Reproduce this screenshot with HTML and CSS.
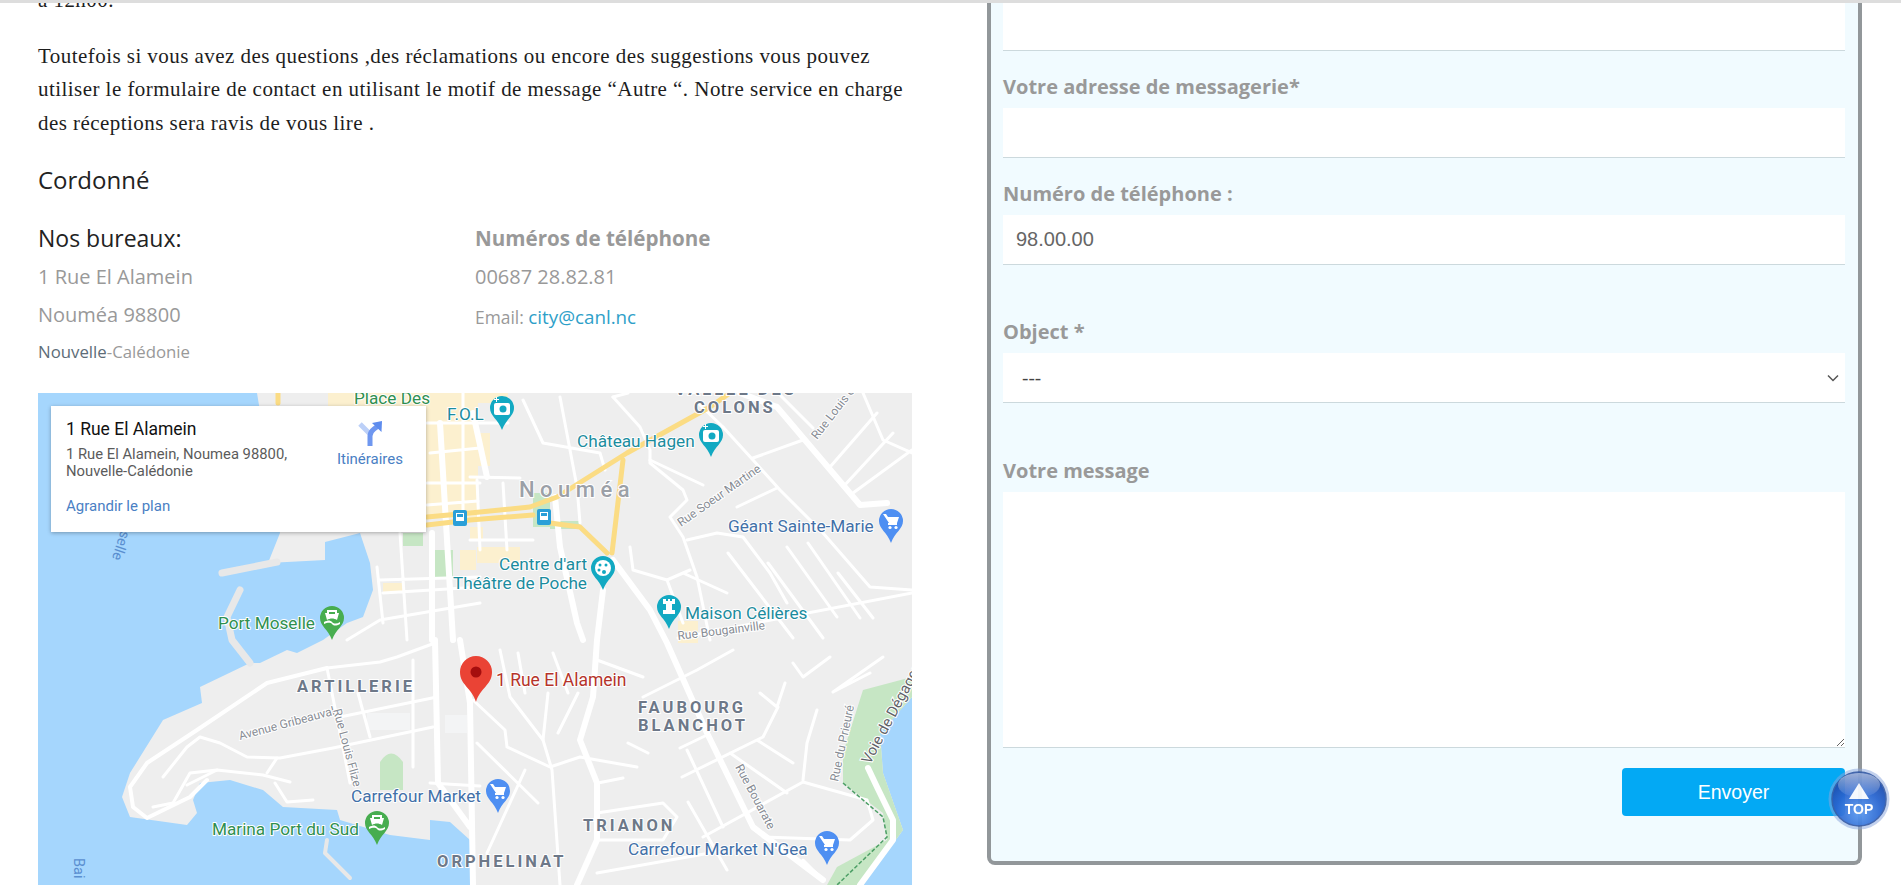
FILE: index.html
```html
<!DOCTYPE html>
<html lang="fr">
<head>
<meta charset="utf-8">
<title>Contact</title>
<link rel="stylesheet" href="styles.css">
</head>
<body>
<div class="topbar"></div>
<div class="page">
  <main class="content">
    <p class="intro clipped">à 12h00.</p>
    <p class="intro">Toutefois si vous avez des questions ,des réclamations ou encore des suggestions vous pouvez<br>utiliser le formulaire de contact en utilisant le motif de message “Autre “. Notre service en charge<br>des réceptions sera ravis de vous lire .</p>
    <h2 class="coord-title">Cordonné</h2>
    <div class="coords">
      <div class="coord-col">
        <h3 class="office-title">Nos bureaux:</h3>
        <p class="line">1 Rue El Alamein</p>
        <p class="line">Nouméa 98800</p>
        <p class="line small"><span class="slate">Nouvelle</span>-Calédonie</p>
      </div>
      <div class="coord-col right-col">
        <h3 class="phone-title">Numéros de téléphone</h3>
        <p class="line">00687 28.82.81</p>
        <p class="line email">Email: <a class="mail" href="#">city@canl.nc</a></p>
      </div>
    </div>
    <div class="map">
      <svg class="map-svg" viewBox="0 0 874 492" width="874" height="492" xmlns="http://www.w3.org/2000/svg">
        <defs>
          <path id="pin" d="M-12 0A12 12 0 1 1 12 0C12 8 4 11 0 22C-4 11-12 8-12 0Z"/>
          <g id="cart"><use href="#pin"/><path class="w" d="M-8-7H-5L-3-4H8L6 2H-2ZM-3 2H6V4H-3Z"/><circle class="w" cx="-1" cy="6.500" r="1.600"/><circle class="w" cx="5" cy="6.500" r="1.600"/></g>
          <g id="cam"><use href="#pin"/><rect class="w" x="-8" y="-5" width="16" height="12" rx="2"/><circle cx="1" cy="1" r="3.500"/><path class="w" d="M-8-9h2v-2h1v2h2v1h-2v2h-1v-2h-2z"/></g>
          <g id="ship"><use href="#pin"/><path class="w" d="M-5-8H5V-5H7L5 2C2 0-2 0-5 2L-7-5H-5Z"/><path d="M-3-6H3V-4H-3Z"/><path class="w" d="M-8 4C-4 2-2 2 0 4C2 6 5 6 8 4V6C4 8 2 8 0 6C-2 4-5 5-8 6Z"/></g>
        </defs>
        <rect class="land" width="874" height="492"/>
        <path class="water" d="M0 0H219L242 140L230 170L287 167L287 149L322 140L332 170L335 197L325 224L309 230L285 247L259 260L249 257L222 270L212 270L162 294L164 310L125 327L92 380L84 404L92 424L149 432L159 420L155 407L162 390L192 387L225 397L245 414L299 417L302 427L352 442L392 447L392 427L412 429L432 447L435 492H0Z"/>
        <path class="water" d="M874 304L842 340L845 380L865 437L825 492H874Z"/>
        <path class="green" d="M874 284L825 297L805 360L805 390L845 420L849 447L799 474L789 492H825L865 437L845 380L842 340L874 304Z"/>
        <path class="green" d="M342 369Q353 352 365 369V397H342Z"/>
        <path class="green" d="M394 157H415V184H394ZM365 140H385V153H365ZM495 100H512V134H495ZM512 128H542V136H512Z"/>
        <path class="cream" d="M290 0H470V10H440V125H290ZM422 157H438V177H422ZM345 190H365V200H345ZM432 40H452V73H432ZM439 154H482V170H439ZM432 134H445V147H432ZM640 228H660V250H640Z"/>
        <path class="pale" d="M329 320H372V337H329ZM407 322H429V340H407Z"/>
        <path class="pier" d="M184 180L239 169M202 197L189 224L194 247L212 270"/>
        <path class="pier thin" d="M289 447L287 460L312 485"/>
        <g class="r">
          <path d="M125 384L149 354L162 344L182 350L209 364L242 365L295 355L395 334"/>
          <path d="M115 414L135 410L152 380L179 377L225 382L252 389"/>
          <path d="M149 392L179 377M239 365L229 380M237 390L249 409L275 407M289 275L312 390M302 324L399 304M320 300L332 344M375 267V374M289 275L342 269L359 264L397 250"/>
          <path d="M392 390L442 393M362 140L369 247M339 174L345 230M342 187L442 184M345 200L442 194M309 247L342 227L442 210M389 90H442M392 60L442 55M389 30H470M425 0V125M389 112L440 108"/>
          <path d="M432 84L482 85M439 87L442 157M465 90L469 157M432 147H495M485 7L505 50L562 60L567 77M522 4L539 94L542 130"/>
          <path d="M575 4L602 34L612 57V70L645 97L649 107L632 124L645 144L659 184L672 247"/>
          <path d="M612 67L665 92M685 34L715 67L742 97L785 140L832 194L874 197M715 65L765 47M649 147L679 140L705 144L732 180L749 210M699 114L739 95"/>
          <path d="M792 74L839 20M805 94L855 40M815 100L874 57M825 0L845 47L874 60M592 154L595 177L629 187L652 177M645 180L689 200M629 187L645 230"/>
          <path d="M749 154L799 224M770 150L822 225M800 180L835 225M690 160L755 245M730 170L785 245M640 245L874 200M660 10L685 34M590 0L575 4M740 0L775 35"/>
          <path d="M559 267L605 284M605 304L659 277L695 257M462 257L472 304L505 347L514 377L522 492M435 307L467 337L469 354L512 374L542 364L599 374M439 350L500 410M487 377L449 460"/>
          <path d="M559 420L625 410L639 424L625 447L559 447M642 355L669 342M644 384L725 344L740 314M649 357L685 434M692 360L749 400M719 347L755 370M722 300L739 314L747 290"/>
          <path d="M665 444L765 389L829 407L835 427L812 447M725 444L812 447M765 387L769 350M769 350L779 317M650 409L689 477M559 480L672 460M765 467L785 487"/>
          <path d="M795 299L832 280M795 299L845 264M755 270L765 284L792 264M480 260L487 300M540 300L520 340M590 350L610 360"/>
          <path d="M505 347L510 300M560 390L585 385M515 260L530 300"/>
        </g>
        <g class="rs">
          <path d="M289 275L229 290L159 337L109 370L92 394L95 414L109 425L152 404L169 387"/>
        </g>
        <g class="rm">
          <path d="M397 247L400 390L432 434M422 247L432 310L435 492M394 140V247M402 30L415 247"/>
          <path d="M517 104L522 154L539 230L545 247M565 197L559 247L555 304L542 347L559 390V447L539 492"/>
          <path d="M739 14L822 112L849 110M702 0L739 14M575 167L612 217L629 250L669 340L715 434L732 447L785 487"/>
          <path d="M830 375L839 394L855 427V447L822 492"/>
          <path d="M435 20L449 84"/>
        </g>
        <g class="y">
          <path d="M240 0V10M389 124L432 120L492 114L519 104L589 60L672 14L692 0"/>
          <path d="M389 132L432 127L495 122M585 67L574 160M512 130L542 134L569 160"/>
        </g>
        <path class="dash" d="M805 390L845 424L849 444L799 492"/>

        <use class="teal" href="#cam" x="464" y="15"/>
        <use class="teal" href="#cam" x="673" y="42"/>
        <g class="teal" transform="translate(565 175)"><use href="#pin"/><circle class="w" r="8"/><circle cx="-3" cy="-3" r="1.500"/><circle cx="3" cy="-3" r="1.500"/><circle cx="-4" cy="2" r="1.500"/><circle cx="1" cy="4" r="2"/></g>
        <g class="teal" transform="translate(631 214)"><use href="#pin"/><path class="w" d="M-6-8H-3V-6H-1V-8H1V-6H3V-8H6V-3H3V3H6V7H-6V3H-3V-3H-6Z"/></g>
        <use class="blue" href="#cart" x="853" y="128"/>
        <use class="blue" href="#cart" x="460" y="398"/>
        <use class="blue" href="#cart" x="789" y="450"/>
        <use class="gr" href="#ship" x="294" y="225"/>
        <use class="gr" href="#ship" x="339" y="430"/>
        <g class="bus" transform="translate(506 124)"><rect x="-7" y="-8" width="14" height="16" rx="2"/><path class="w" d="M-4-5H4V3H-4Z"/><path d="M-3-4H3V-1H-3Z"/></g>
        <g class="bus" transform="translate(422 125)"><rect x="-7" y="-8" width="14" height="16" rx="2"/><path class="w" d="M-4-5H4V3H-4Z"/><path d="M-3-4H3V-1H-3Z"/></g>

        <g class="poi t-green">
          <text x="316" y="11">Place Des</text>
          <text x="180" y="236">Port Moselle</text>
          <text x="174" y="442">Marina Port du Sud</text>
        </g>
        <g class="poi t-teal">
          <text x="409" y="27">F.O.L</text>
          <text x="539" y="54">Château Hagen</text>
          <text x="549" y="177" text-anchor="end">Centre d'art</text>
          <text x="549" y="196" text-anchor="end">Théâtre de Poche</text>
          <text x="647" y="226">Maison Célières</text>
        </g>
        <g class="poi t-blue">
          <text x="690" y="139">Géant Sainte-Marie</text>
          <text x="313" y="409">Carrefour Market</text>
          <text x="590" y="462">Carrefour Market N'Gea</text>
        </g>
        <text class="poi t-red" x="458" y="293">1 Rue El Alamein</text>
        <text class="city" x="481" y="104">Nouméa</text>
        <g class="area">
          <text x="637" y="2">VALLEE DES</text>
          <text x="656" y="20">COLONS</text>
          <text x="259" y="299">ARTILLERIE</text>
          <text x="600" y="320">FAUBOURG</text>
          <text x="600" y="338">BLANCHOT</text>
          <text x="545" y="438">TRIANON</text>
          <text x="399" y="474">ORPHELINAT</text>
        </g>
        <g class="street">
          <text transform="translate(779 47) rotate(-52)">Rue Louis C</text>
          <text transform="translate(643 134) rotate(-35)">Rue Soeur Martine</text>
          <text transform="translate(640 247) rotate(-7)">Rue Bougainville</text>
          <text transform="translate(202 347) rotate(-15)">Avenue Gribeauval</text>
          <text transform="translate(295 317) rotate(75)">Rue Louis Flize</text>
          <text transform="translate(697 374) rotate(62)">Rue Bouarate</text>
          <text transform="translate(800 389) rotate(-78)">Rue du Prieuré</text>
        </g>
        <text class="road-big" transform="translate(832 372) rotate(-62)">Voie de Dégager</text>
        <g class="sea">
          <text transform="translate(83 137) rotate(108)">selle</text>
          <text transform="translate(36 465) rotate(90)">Bai</text>
        </g>
        <path class="redpin" d="M438 309C434 295 422 292 422 279A16 16 0 1 1 454 279C454 292 442 295 438 309Z"/>
        <circle class="reddot" cx="438" cy="279" r="5.500"/>
      </svg>
      <div class="info">
        <div class="info-main">
          <div class="info-title">1 Rue El Alamein</div>
          <div class="info-addr">1 Rue El Alamein, Noumea 98800,<br>Nouvelle-Calédonie</div>
          <a class="info-link" href="#">Agrandir le plan</a>
        </div>
        <a class="info-dir" href="#">
          <svg class="dir-icon" viewBox="0 0 30 30" width="30" height="30" xmlns="http://www.w3.org/2000/svg">
            <path class="dir-pale" d="M5 6L15 16"/>
            <path class="dir-blue" d="M15 28V18Q15 14 19 11L23 8"/>
            <path class="dir-head" d="M27 3L26.500 14L17 5Z"/>
          </svg>
          <span>Itinéraires</span>
        </a>
      </div>
    </div>
  </main>
  <form class="panel">
    <input class="field first" type="text">
    <label class="label l-mail">Votre adresse de messagerie*</label>
    <input class="field" type="text">
    <label class="label l-tel">Numéro de téléphone :</label>
    <input class="field" type="text" value="98.00.00">
    <label class="label l-obj">Object *</label>
    <select class="field pick"><option>---</option></select>
    <label class="label l-msg">Votre message</label>
    <textarea class="area-field"></textarea>
    <div class="actions"><button class="send" type="button">Envoyer</button></div>
  </form>
</div>
<a class="to-top" href="#">
  <svg viewBox="0 0 62 62" width="62" height="62" xmlns="http://www.w3.org/2000/svg">
    <defs>
      <radialGradient id="orb" cx="50%" cy="75%" r="70%">
        <stop offset="0" stop-color="#5d9bf0"/>
        <stop offset=".6" stop-color="#2a66d0"/>
        <stop offset="1" stop-color="#1c4aa8"/>
      </radialGradient>
      <linearGradient id="gloss" x1="0" y1="0" x2="0" y2="1">
        <stop offset="0" stop-color="#fff" stop-opacity=".55"/>
        <stop offset="1" stop-color="#fff" stop-opacity=".05"/>
      </linearGradient>
    </defs>
    <circle cx="31" cy="31" r="30.500" fill="#8aa6dc" opacity=".55"/>
    <circle cx="31" cy="31" r="27" fill="url(#orb)" stroke="#3a5fa8" stroke-width="1.500"/>
    <ellipse cx="31" cy="17" rx="21" ry="12" fill="url(#gloss)"/>
    <path d="M31 15L41 31H21Z" fill="#fff" opacity=".95"/>
    <text class="top-text" x="31" y="46" text-anchor="middle">TOP</text>
  </svg>
</a>
</body>
</html>
```
FILE: styles.css
```css
* { box-sizing: border-box; }
html, body { margin: 0; height: 889px; overflow: hidden; background: #fff; }
body { font-family: "Open Sans", sans-serif; color: #999; }
.topbar { height: 3px; background: #ddd; }
.page { display: flex; height: 886px; overflow: hidden; }

.content { width: 874px; margin-left: 38px; flex: none; }
.intro {
  margin: 0 0 25px;
  font-family: "Liberation Serif", serif;
  font-size: 21px;
  line-height: 33.500px;
  letter-spacing: .45px;
  color: #1d1d1d;
  white-space: nowrap;
}
.clipped { margin: -19px 0 0; padding-bottom: 22px; }
.coord-title { margin: 0 0 28px; font-size: 24px; line-height: 30px; font-weight: 400; color: #222; }
.coords { display: flex; }
.coord-col { width: 437px; }
.office-title { margin: 0 0 9px; font-size: 23px; line-height: 30px; font-weight: 400; color: #222; }
.phone-title { margin: 0 0 9px; font-size: 20.600px; line-height: 30px; font-weight: 700; color: #999; }
.line { margin: 0 0 8px; font-size: 20px; line-height: 30px; color: #999; }
.small { margin-top: -1px; font-size: 16.800px; }
.email { margin-top: 10px; font-size: 17.400px; }
.slate { color: #5d6d78; }
.mail { color: #2e9fc9; text-decoration: none; font-size: 18.800px; }

.map { position: relative; width: 874px; height: 492px; margin-top: 18px; overflow: hidden; }
.map-svg { display: block; }
.land { fill: #eeeeee; }
.water { fill: #a5d6fd; }
.green { fill: #c6e6c4; }
.cream { fill: #fcf0cf; }
.pale { fill: #f3f4f5; }
.pier { fill: none; stroke: #e8e8e8; stroke-width: 7; stroke-linecap: round; stroke-linejoin: round; }
.pier.thin { stroke-width: 4; }
.r path, .rs path, .rm path, .y path { fill: none; stroke-linecap: round; stroke-linejoin: round; }
.r path { stroke: #fff; stroke-width: 3; }
.rs path { stroke: #fff; stroke-width: 4; }
.rm path { stroke: #fff; stroke-width: 6; }
.y path { stroke: #fbdc84; stroke-width: 5; }
.dash { fill: none; stroke: #4d9f66; stroke-width: 1.500; stroke-dasharray: 4 2; }
.w { fill: #fff; }
.teal { fill: #12a9c2; }
.blue { fill: #4e8ff2; }
.gr { fill: #47ad4f; }
.bus { fill: #2a9fd8; }
.poi { font-family: Roboto, sans-serif; font-size: 17.200px; paint-order: stroke; stroke: #fff; stroke-width: 2px; stroke-linejoin: round; }
.t-green { fill: #2f8f50; }
.t-teal { fill: #1b8c9e; }
.t-blue { fill: #4270a8; }
.t-red { fill: #b5332a; font-size: 17.500px; }
.city { font-family: Roboto, sans-serif; font-size: 22px; font-weight: 500; letter-spacing: 5.500px; fill: #9ba0a7; paint-order: stroke; stroke: #fff; stroke-width: 2px; }
.area { font-family: Roboto, sans-serif; font-size: 16.500px; font-weight: 700; letter-spacing: 3px; fill: #6d7888; paint-order: stroke; stroke: #fff; stroke-width: 2px; }
.street { font-family: Roboto, sans-serif; font-size: 12px; fill: #878c94; paint-order: stroke; stroke: #fff; stroke-width: 2px; }
.road-big { font-family: Roboto, sans-serif; font-size: 15px; fill: #5f6368; paint-order: stroke; stroke: #fff; stroke-width: 2px; }
.sea { font-family: Roboto, sans-serif; font-size: 14.500px; fill: #5a8fd0; }
.redpin { fill: #ea4335; }
.reddot { fill: #a50e0e; }

.info {
  position: absolute; left: 13px; top: 13px; width: 375px; height: 126px;
  display: flex; justify-content: space-between;
  padding: 12px 23px 0 15px;
  background: #fff; box-shadow: 0 1px 4px rgba(0, 0, 0, .3);
  font-family: Roboto, sans-serif;
}
.info-title { font-size: 17.500px; line-height: 22px; color: #111; }
.info-addr { margin-top: 6px; font-size: 14.800px; line-height: 17px; color: #5b5b5b; }
.info-link { display: block; margin-top: 16px; font-size: 15px; line-height: 20px; color: #4a80c4; text-decoration: none; }
.info-dir { display: flex; flex-direction: column; align-items: center; font-size: 15px; line-height: 16px; color: #4a80c4; text-decoration: none; }
.dir-icon { display: block; margin-bottom: 3px; }
.dir-pale { fill: none; stroke: #bcd0f8; stroke-width: 5; }
.dir-blue { fill: none; stroke: #6f97f0; stroke-width: 5; }
.dir-head { fill: #5e8cee; }

.panel {
  width: 875px; height: 862px; margin-left: 75px; flex: none;
  padding: 0 13px 0 12px;
  background: #f1fbff;
  border: 4px solid #92979a; border-top: 0;
  border-radius: 0 0 8px 8px;
}
.label { display: block; font-size: 20px; line-height: 26px; font-weight: 700; color: #999; margin-bottom: 8px; }
.field {
  display: block; width: 100%; height: 50px; padding: 0 13px;
  background: #fff; border: 0; border-bottom: 1px solid #ccd9dd; border-radius: 0;
  font-family: "Liberation Sans", sans-serif; font-size: 20px; color: #666;
}
.field.first { height: 48px; }
.l-mail, .l-tel { margin-top: 23px; }
.l-obj { margin-top: 54px; }
.l-msg { margin-top: 55px; }
.pick {
  padding-left: 19px; font-family: "Open Sans", sans-serif; font-size: 20px; color: #444; outline: 0;
  appearance: none;
  background: #fff url("data:image/svg+xml,%3Csvg xmlns='http://www.w3.org/2000/svg' width='12' height='8'%3E%3Cpath d='M1 1.500L6 6.500L11 1.500' fill='none' stroke='%23555' stroke-width='1.500'/%3E%3C/svg%3E") no-repeat right 6px center;
}
.area-field {
  display: block; width: 100%; height: 256px;
  background: #fff; border: 0; border-bottom: 1px solid #ccd9dd;
}
.actions { display: flex; justify-content: flex-end; margin-top: 20px; }
.send {
  width: 223px; height: 48px; border: 0; border-radius: 4px;
  background: #03a9f4; color: #fff;
  font-family: "Liberation Sans", sans-serif; font-size: 19.500px;
}
.to-top { position: fixed; left: 1828px; top: 768px; width: 62px; height: 62px; opacity: .95; }
.to-top svg { display: block; }
.top-text { font-family: "Liberation Sans", sans-serif; font-size: 14px; font-weight: 700; fill: #fff; }
```
